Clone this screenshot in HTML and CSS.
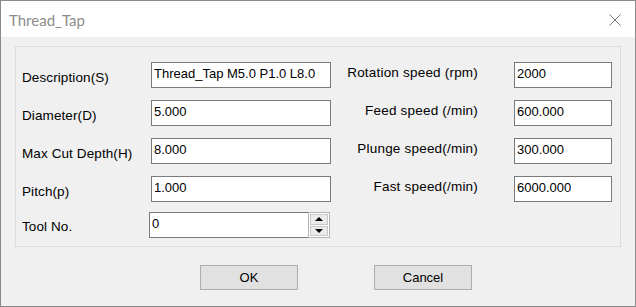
FILE: index.html
```html
<!DOCTYPE html>
<html lang="en">
<head>
  <meta charset="UTF-8">
  <title>Thread_Tap</title>
  <link rel="stylesheet" href="styles.css">
</head>
<body>
  <div class="window">
    <div class="titlebar">
      <span class="title">Thread_Tap</span>
      <svg class="close" width="12" height="12" viewBox="0 0 12 12">
        <path d="M0.5 0.5 L11.5 11.5 M11.5 0.5 L0.5 11.5" stroke="#767676" stroke-width="1" fill="none"/>
      </svg>
    </div>

    <div class="content">
      <div class="group">
        <label class="lbl">Description(S)</label>
        <input class="field" type="text" value="Thread_Tap M5.0 P1.0 L8.0">
        <label class="lbl-r">Rotation speed (rpm)</label>
        <input class="field" type="text" value="2000">

        <label class="lbl">Diameter(D)</label>
        <input class="field" type="text" value="5.000">
        <label class="lbl-r">Feed speed (/min)</label>
        <input class="field" type="text" value="600.000">

        <label class="lbl">Max Cut Depth(H)</label>
        <input class="field" type="text" value="8.000">
        <label class="lbl-r">Plunge speed(/min)</label>
        <input class="field" type="text" value="300.000">

        <label class="lbl">Pitch(p)</label>
        <input class="field" type="text" value="1.000">
        <label class="lbl-r">Fast speed(/min)</label>
        <input class="field" type="text" value="6000.000">

        <label class="lbl tool-row tool-lbl">Tool No.</label>
        <div class="spin tool-row">
          <input class="spin-field" type="text" value="0">
          <div class="spin-btns">
            <div class="spin-btn"><span class="arrow-up"></span></div>
            <div class="spin-btn"><span class="arrow-down"></span></div>
          </div>
        </div>
      </div>

      <div class="buttons">
        <button class="button">OK</button>
        <button class="button">Cancel</button>
      </div>
    </div>
  </div>
</body>
</html>
```

FILE: styles.css
```css
body {
  margin: 0;
  padding: 0;
  background-color: #f0f0f0;
  font-family: "Liberation Sans", Arial, sans-serif;
  font-size: 13px;
  color: #000;
}
.window {
  width: 636px;
  height: 307px;
  box-sizing: border-box;
  border: 1px solid #8a8a8a;
  background-color: #f0f0f0;
  display: flex;
  flex-direction: column;
}
.titlebar {
  height: 36px;
  flex-shrink: 0;
  background-color: #fff;
  display: flex;
  align-items: center;
  justify-content: space-between;
  padding: 0 14px 0 8px;
}
.title {
  font-family: "Lato", "Noto Sans", sans-serif;
  font-size: 15px;
  color: #8c8c8c;
  margin-top: 2px;
}
.close {
  margin-top: 1px;
}
.content {
  flex: 1;
}
.group {
  margin: 9px 0 0 14px;
  width: 606px;
  height: 201px;
  box-sizing: border-box;
  border: 1px solid #dcdcdc;
  padding: 15px 0 0 6px;
  display: grid;
  grid-template-columns: 129px 180px 183px 98px;
  grid-auto-rows: 26px;
  row-gap: 12px;
}
.lbl {
  align-self: center;
  padding-top: 4px;
  white-space: nowrap;
  font-size: 13.5px;
  letter-spacing: 0.1px;
}
.tool-lbl {
  padding-top: 1px;
}
.lbl-r {
  align-self: center;
  text-align: right;
  padding-right: 36px;
  padding-bottom: 6px;
  white-space: nowrap;
  font-size: 13.5px;
  letter-spacing: 0.2px;
}
.field {
  box-sizing: border-box;
  width: 100%;
  height: 26px;
  margin: 0;
  border: 1px solid #7a7a7a;
  background-color: #fff;
  font-family: "Liberation Sans", Arial, sans-serif;
  font-size: 13px;
  color: #000;
  padding: 0 2px 4px 2px;
  outline: none;
}
.tool-row {
  margin-top: -2px;
}
.spin {
  display: flex;
  width: 181px;
  height: 26px;
  margin-left: -2px;
}
.spin-field {
  flex: 1;
  min-width: 0;
  box-sizing: border-box;
  height: 26px;
  margin: 0;
  border: 1px solid #7a7a7a;
  border-right: none;
  background-color: #fff;
  font-family: "Liberation Sans", Arial, sans-serif;
  font-size: 13px;
  color: #000;
  padding: 0 2px 4px 2px;
  outline: none;
}
.spin-btns {
  width: 22px;
  box-sizing: border-box;
  border: 1px solid #b4b4b4;
  background-color: #fff;
  display: flex;
  flex-direction: column;
  gap: 1px;
  padding: 1px;
}
.spin-btn {
  flex: 1;
  background-color: #ebebeb;
  border: 1px solid #c8c8c8;
  display: flex;
  align-items: center;
  justify-content: center;
}
.arrow-up {
  width: 0;
  height: 0;
  border-left: 4px solid transparent;
  border-right: 4px solid transparent;
  border-bottom: 4px solid #000;
}
.arrow-down {
  width: 0;
  height: 0;
  border-left: 4px solid transparent;
  border-right: 4px solid transparent;
  border-top: 4px solid #000;
}
.buttons {
  display: flex;
  gap: 76px;
  padding-left: 199px;
  margin-top: 18px;
}
.button {
  width: 98px;
  height: 25px;
  box-sizing: border-box;
  border: 1px solid #adadad;
  background-color: #e1e1e1;
  font-family: "Liberation Sans", Arial, sans-serif;
  font-size: 13px;
  color: #000;
  padding: 0;
}
```
